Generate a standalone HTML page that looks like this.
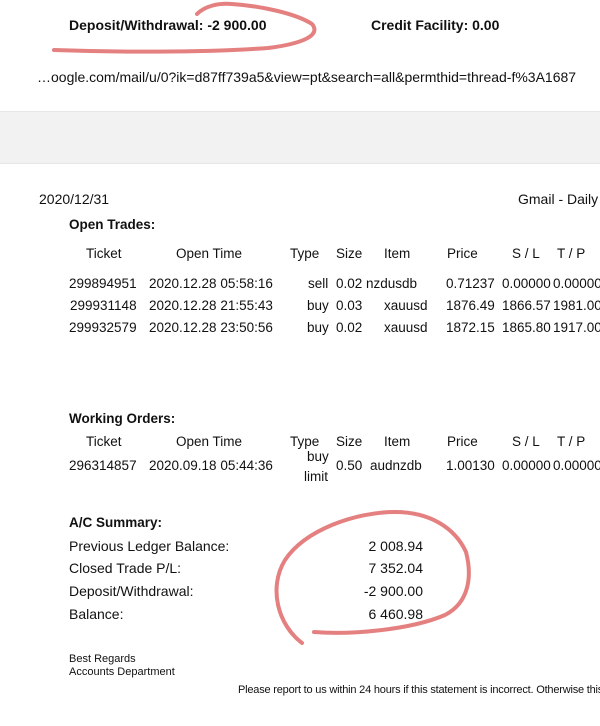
<!DOCTYPE html>
<html><head><meta charset="utf-8"><style>
body{margin:0;width:600px;height:726px;overflow:hidden;background:#fff;font-family:"Liberation Sans",Arial,sans-serif;color:#111;position:relative}
.t{position:absolute;white-space:nowrap;font-size:13.5px;line-height:16px}
.b{font-weight:bold}
.band{position:absolute;left:0;top:111px;width:600px;height:51px;background:#f2f2f2;border-top:1px solid #e6e6e6;border-bottom:1px solid #e6e6e6}
</style></head><body>
<div class="t b" style="left:69px;top:17px;font-size:14px">Deposit/Withdrawal: -2 900.00</div>
<div class="t b" style="left:371px;top:17px;font-size:14px">Credit Facility: 0.00</div>
<div class="t" style="left:37px;top:69px;font-size:14px">…oogle.com/mail/u/0?ik=d87ff739a5&amp;view=pt&amp;search=all&amp;permthid=thread-f%3A1687</div>
<div class="band"></div>
<div class="t" style="left:39px;top:191px;font-size:14px">2020/12/31</div>
<div class="t" style="left:518px;top:191px;font-size:14px">Gmail - Daily</div>
<div class="t b" style="left:69px;top:217px">Open Trades:</div>

<div class="t" style="left:86px;top:246px">Ticket</div>
<div class="t" style="left:176px;top:246px">Open Time</div>
<div class="t" style="left:290px;top:246px">Type</div>
<div class="t" style="left:336px;top:246px">Size</div>
<div class="t" style="left:384px;top:246px">Item</div>
<div class="t" style="left:447px;top:246px">Price</div>
<div class="t" style="left:512px;top:246px">S / L</div>
<div class="t" style="left:557px;top:246px">T / P</div>

<div class="t" style="left:69px;top:276px">299894951</div>
<div class="t" style="left:149px;top:276px">2020.12.28 05:58:16</div>
<div class="t" style="left:308px;top:276px">sell</div>
<div class="t" style="left:336px;top:276px">0.02</div>
<div class="t" style="left:366px;top:276px">nzdusdb</div>
<div class="t" style="left:446px;top:276px">0.71237</div>
<div class="t" style="left:502px;top:276px">0.00000</div>
<div class="t" style="left:553px;top:276px">0.00000</div>

<div class="t" style="left:70px;top:298px">299931148</div>
<div class="t" style="left:149px;top:298px">2020.12.28 21:55:43</div>
<div class="t" style="left:307px;top:298px">buy</div>
<div class="t" style="left:336px;top:298px">0.03</div>
<div class="t" style="left:384px;top:298px">xauusd</div>
<div class="t" style="left:446px;top:298px">1876.49</div>
<div class="t" style="left:502px;top:298px">1866.57</div>
<div class="t" style="left:553px;top:298px">1981.00</div>

<div class="t" style="left:69px;top:320px">299932579</div>
<div class="t" style="left:149px;top:320px">2020.12.28 23:50:56</div>
<div class="t" style="left:307px;top:320px">buy</div>
<div class="t" style="left:336px;top:320px">0.02</div>
<div class="t" style="left:384px;top:320px">xauusd</div>
<div class="t" style="left:446px;top:320px">1872.15</div>
<div class="t" style="left:502px;top:320px">1865.80</div>
<div class="t" style="left:553px;top:320px">1917.00</div>

<div class="t b" style="left:69px;top:411px">Working Orders:</div>
<div class="t" style="left:86px;top:434px">Ticket</div>
<div class="t" style="left:176px;top:434px">Open Time</div>
<div class="t" style="left:290px;top:434px">Type</div>
<div class="t" style="left:336px;top:434px">Size</div>
<div class="t" style="left:384px;top:434px">Item</div>
<div class="t" style="left:447px;top:434px">Price</div>
<div class="t" style="left:512px;top:434px">S / L</div>
<div class="t" style="left:557px;top:434px">T / P</div>

<div class="t" style="left:69px;top:458px">296314857</div>
<div class="t" style="left:149px;top:458px">2020.09.18 05:44:36</div>
<div class="t" style="left:307px;top:449px">buy</div>
<div class="t" style="left:304px;top:469px">limit</div>
<div class="t" style="left:336px;top:458px">0.50</div>
<div class="t" style="left:370px;top:458px">audnzdb</div>
<div class="t" style="left:446px;top:458px">1.00130</div>
<div class="t" style="left:502px;top:458px">0.00000</div>
<div class="t" style="left:553px;top:458px">0.00000</div>

<div class="t b" style="left:69px;top:515px">A/C Summary:</div>
<div class="t" style="left:69px;top:538px;font-size:14px">Previous Ledger Balance:</div>
<div class="t" style="left:69px;top:560px;font-size:14px">Closed Trade P/L:</div>
<div class="t" style="left:69px;top:583px;font-size:14px">Deposit/Withdrawal:</div>
<div class="t" style="left:69px;top:606px;font-size:14px">Balance:</div>
<div class="t" style="right:177px;top:538px;font-size:14px">2 008.94</div>
<div class="t" style="right:177px;top:560px;font-size:14px">7 352.04</div>
<div class="t" style="right:177px;top:583px;font-size:14px">-2 900.00</div>
<div class="t" style="right:177px;top:606px;font-size:14px">6 460.98</div>

<div class="t" style="left:69px;top:653px;font-size:11px;line-height:13px">Best Regards<br>Accounts Department</div>
<div class="t" style="left:238px;top:682px;font-size:11px;letter-spacing:-0.2px">Please report to us within 24 hours if this statement is incorrect. Otherwise this</div>

<svg width="600" height="726" style="position:absolute;left:0;top:0" fill="none" stroke="#e06a6a" stroke-width="4" stroke-linecap="round" opacity="0.85">
<path d="M197 14 C205 6 218 3 232 4 C260 6 295 13 312 24 C322 36 300 44 268 48 C200 53 110 52 54 50"/>
<path d="M314 632 C350 635 410 630 445 615 C470 602 472 575 466 552 C455 528 430 512 395 512 C355 512 305 530 285 560 C268 588 278 625 302 643"/>
</svg>
</body></html>
